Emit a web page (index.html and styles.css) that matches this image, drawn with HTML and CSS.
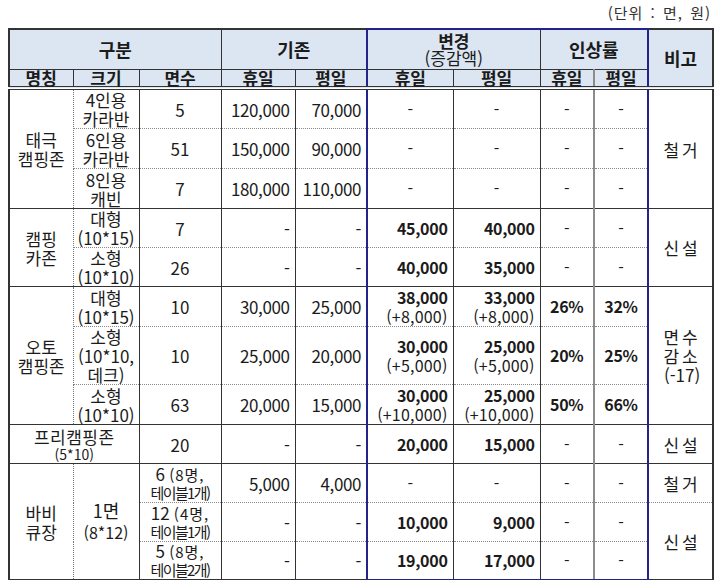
FILE: index.html
```html
<!DOCTYPE html>
<html lang="ko">
<head>
<meta charset="utf-8">
<title>캠핑장 사용료 변경</title>
<link rel="stylesheet" href="styles.css">
</head>
<body>
<div class="page">
  <div class="unit">(단위 : 면, 원)</div>
  <table class="t">
    <colgroup>
      <col class="w64"><col class="w66"><col class="w82"><col class="w74"><col class="w72">
      <col class="w86"><col class="w87"><col class="w54"><col class="w54"><col class="w65">
    </colgroup>
    <thead>
      <tr class="h1">
        <th colspan="3">구분</th>
        <th colspan="2">기존</th>
        <th colspan="2" class="bl bt chg">변경<br><span class="nb">(증감액)</span></th>
        <th colspan="2" class="br bt">인상률</th>
        <th rowspan="2" class="dbl">비고</th>
      </tr>
      <tr class="h2">
        <th class="dbl">명칭</th>
        <th class="dbl">크기</th>
        <th class="dbl">면수</th>
        <th class="dbl">휴일</th>
        <th class="dbl">평일</th>
        <th class="dbl bl">휴일</th>
        <th class="dbl">평일</th>
        <th class="dbl ri">휴일</th>
        <th class="dbl br">평일</th>
      </tr>
    </thead>
    <tbody>
      <tr class="g r39">
        <td rowspan="3" class="nm">태극<br>캠핑존</td>
        <td class="sz">4인용<br>카라반</td>
        <td class="cn">5</td>
        <td class="rt">120,000</td>
        <td class="rt">70,000</td>
        <td class="bl ctr">-</td>
        <td class="ctr">-</td>
        <td class="ri ctr">-</td>
        <td class="br ctr">-</td>
        <td rowspan="3" class="note">철거</td>
      </tr>
      <tr class="s r40">
        <td class="sz">6인용<br>카라반</td>
        <td class="cn">51</td>
        <td class="rt">150,000</td>
        <td class="rt">90,000</td>
        <td class="bl ctr">-</td>
        <td class="ctr">-</td>
        <td class="ri ctr">-</td>
        <td class="br ctr">-</td>
      </tr>
      <tr class="s r40">
        <td class="sz">8인용<br>캐빈</td>
        <td class="cn">7</td>
        <td class="rt">180,000</td>
        <td class="rt">110,000</td>
        <td class="bl ctr">-</td>
        <td class="ctr">-</td>
        <td class="ri ctr">-</td>
        <td class="br ctr">-</td>
      </tr>

      <tr class="g r39">
        <td rowspan="2" class="nm">캠핑<br>카존</td>
        <td class="sz">대형<br>(10*15)</td>
        <td class="cn">7</td>
        <td class="rt">-</td>
        <td class="rt">-</td>
        <td class="bl rb">45,000</td>
        <td class="rb">40,000</td>
        <td class="ri ctr">-</td>
        <td class="br ctr">-</td>
        <td rowspan="2" class="note">신설</td>
      </tr>
      <tr class="s r39">
        <td class="sz">소형<br>(10*10)</td>
        <td class="cn">26</td>
        <td class="rt">-</td>
        <td class="rt">-</td>
        <td class="bl rb">40,000</td>
        <td class="rb">35,000</td>
        <td class="ri ctr">-</td>
        <td class="br ctr">-</td>
      </tr>

      <tr class="g r40">
        <td rowspan="3" class="nm">오토<br>캠핑존</td>
        <td class="sz">대형<br>(10*15)</td>
        <td class="cn">10</td>
        <td class="rt">30,000</td>
        <td class="rt">25,000</td>
        <td class="bl rb">38,000<br><span class="inc">(+8,000)</span></td>
        <td class="rb">33,000<br><span class="inc">(+8,000)</span></td>
        <td class="ri pct">26%</td>
        <td class="br pct">32%</td>
        <td rowspan="3" class="note">면수<br>감소<br><span class="ns">(-17)</span></td>
      </tr>
      <tr class="s r56">
        <td class="sz">소형<br>(10*10,<br>데크)</td>
        <td class="cn">10</td>
        <td class="rt">25,000</td>
        <td class="rt">20,000</td>
        <td class="bl rb">30,000<br><span class="inc">(+5,000)</span></td>
        <td class="rb">25,000<br><span class="inc">(+5,000)</span></td>
        <td class="ri pct">20%</td>
        <td class="br pct">25%</td>
      </tr>
      <tr class="s r40">
        <td class="sz">소형<br>(10*10)</td>
        <td class="cn">63</td>
        <td class="rt">20,000</td>
        <td class="rt">15,000</td>
        <td class="bl rb">30,000<br><span class="inc">(+10,000)</span></td>
        <td class="rb">25,000<br><span class="inc">(+10,000)</span></td>
        <td class="ri pct">50%</td>
        <td class="br pct">66%</td>
      </tr>

      <tr class="g r39">
        <td colspan="2" class="free"><span class="fl">프리캠핑존</span><span class="fs">(5*10)</span></td>
        <td class="cn">20</td>
        <td class="rt">-</td>
        <td class="rt">-</td>
        <td class="bl rb">20,000</td>
        <td class="rb">15,000</td>
        <td class="ri ctr">-</td>
        <td class="br ctr">-</td>
        <td class="note">신설</td>
      </tr>

      <tr class="g r39">
        <td rowspan="3" class="nm">바비<br>큐장</td>
        <td rowspan="3" class="sz bbqsz"><span class="one">1면</span><br>(8*12)</td>
        <td class="bbq"><span class="big">6</span> <span class="pp">(8명,</span><br><span class="cond">테이블1개)</span></td>
        <td class="rt">5,000</td>
        <td class="rt">4,000</td>
        <td class="bl ctr">-</td>
        <td class="ctr">-</td>
        <td class="ri ctr">-</td>
        <td class="br ctr">-</td>
        <td class="note">철거</td>
      </tr>
      <tr class="s r39">
        <td class="bbq"><span class="big">12</span> <span class="pp">(4명,</span><br><span class="cond">테이블1개)</span></td>
        <td class="rt">-</td>
        <td class="rt">-</td>
        <td class="bl rb">10,000</td>
        <td class="rb">9,000</td>
        <td class="ri ctr">-</td>
        <td class="br ctr">-</td>
        <td rowspan="2" class="note">신설</td>
      </tr>
      <tr class="s r37">
        <td class="bbq"><span class="big">5</span> <span class="pp">(8명,</span><br><span class="cond">테이블2개)</span></td>
        <td class="rt">-</td>
        <td class="rt">-</td>
        <td class="bl bb rb">19,000</td>
        <td class="bb rb">17,000</td>
        <td class="ri bb ctr">-</td>
        <td class="br bb ctr">-</td>
      </tr>
    </tbody>
  </table>
</div>
</body>
</html>
```

FILE: styles.css
```css
html, body {
  margin: 0;
  padding: 0;
  background: #ffffff;
}

body {
  font-family: "Noto Sans CJK KR", "Noto Sans", sans-serif;
  color: #1b1b1b;
}

.page {
  padding: 0 7px 0 8px;
}

.unit {
  height: 28px;
  line-height: 26px;
  font-size: 15px;
  text-align: right;
  color: #333;
  padding-right: 2px;
  letter-spacing: 1px;
  word-spacing: 2px;
}

.t {
  width: 704px;
  table-layout: fixed;
  border-collapse: collapse;
  border: 2px solid #333;
}

.w64 { width: 64px; }
.w66 { width: 66px; }
.w82 { width: 82px; }
.w74 { width: 74px; }
.w72 { width: 72px; }
.w86 { width: 86px; }
.w87 { width: 87px; }
.w54 { width: 54px; }
.w65 { width: 65px; }

th {
  background: #dce6f2;
  font-weight: 700;
  border: 1px solid #333;
  padding: 0;
  text-align: center;
  vertical-align: middle;
}

.h1 { height: 40px; }
.h1 th {
  font-size: 18px;
  line-height: 18px;
}
.h1 th.chg { font-size: 17px; line-height: 17px; }
.nb { font-weight: 400; }

.h2 { height: 19px; }
.h2 th {
  font-size: 17px;
  line-height: 16px;
}

th.dbl { border-bottom: 4px double #333; }

td {
  font-size: 16px;
  line-height: 19px;
  padding: 0 5px;
  vertical-align: middle;
  text-align: center;
  border-left: 1px solid #333;
  border-right: 1px solid #333;
  border-top: none;
  border-bottom: none;
  white-space: nowrap;
}

tr.g td { border-top: 1px solid #333; }
tr.s td { border-top: 1px dotted #8a8a8a; }

.r37 { height: 37px; }
.r39 { height: 39px; }
.r40 { height: 40px; }
.r56 { height: 56px; }

td.nm {
  border-right: 1px dotted #777;
  padding: 0 2px;
  font-size: 17px;
  line-height: 19px;
}
td.sz {
  border-left: 1px dotted #777;
  padding: 0 2px;
  font-size: 17px;
  line-height: 19px;
}
td.cn { font-size: 17px; }

td.rt {
  text-align: right;
  padding-right: 5px;
  font-size: 17px;
  letter-spacing: -0.4px;
}

td.rb {
  text-align: right;
  padding-right: 5px;
  font-weight: 700;
  font-size: 16px;
  line-height: 19px;
  letter-spacing: -0.3px;
}
.inc {
  font-weight: 400;
  letter-spacing: 0.2px;
}

td.ctr { text-align: center; }

td.pct {
  font-weight: 700;
  font-size: 16px;
  letter-spacing: -0.3px;
}

td.note {
  font-size: 17px;
  letter-spacing: 3px;
  padding-left: 8px;
}
.ns { letter-spacing: 0; }

td.free {
  padding: 0;
}
.fl {
  display: block;
  font-size: 17px;
  line-height: 20px;
  letter-spacing: 0.5px;
}
.fs {
  display: block;
  font-size: 14px;
  line-height: 15px;
}

td.bbqsz { font-size: 16px; line-height: 21px; }
.one { font-size: 18px; }

td.bbq {
  padding: 0 1px;
  font-size: 15px;
  line-height: 18px;
}
.big { font-size: 17px; }
.pp { letter-spacing: 1px; }
.cond { letter-spacing: -1.6px; }

.bl { border-left: 2px solid #23238a !important; }
.br { border-right: 2px solid #23238a !important; }
.bt { border-top: 2px solid #23238a !important; }
.bb { border-bottom: 2px solid #23238a !important; }
.ri { border-right: 2px solid #8c8c8c !important; }
```
